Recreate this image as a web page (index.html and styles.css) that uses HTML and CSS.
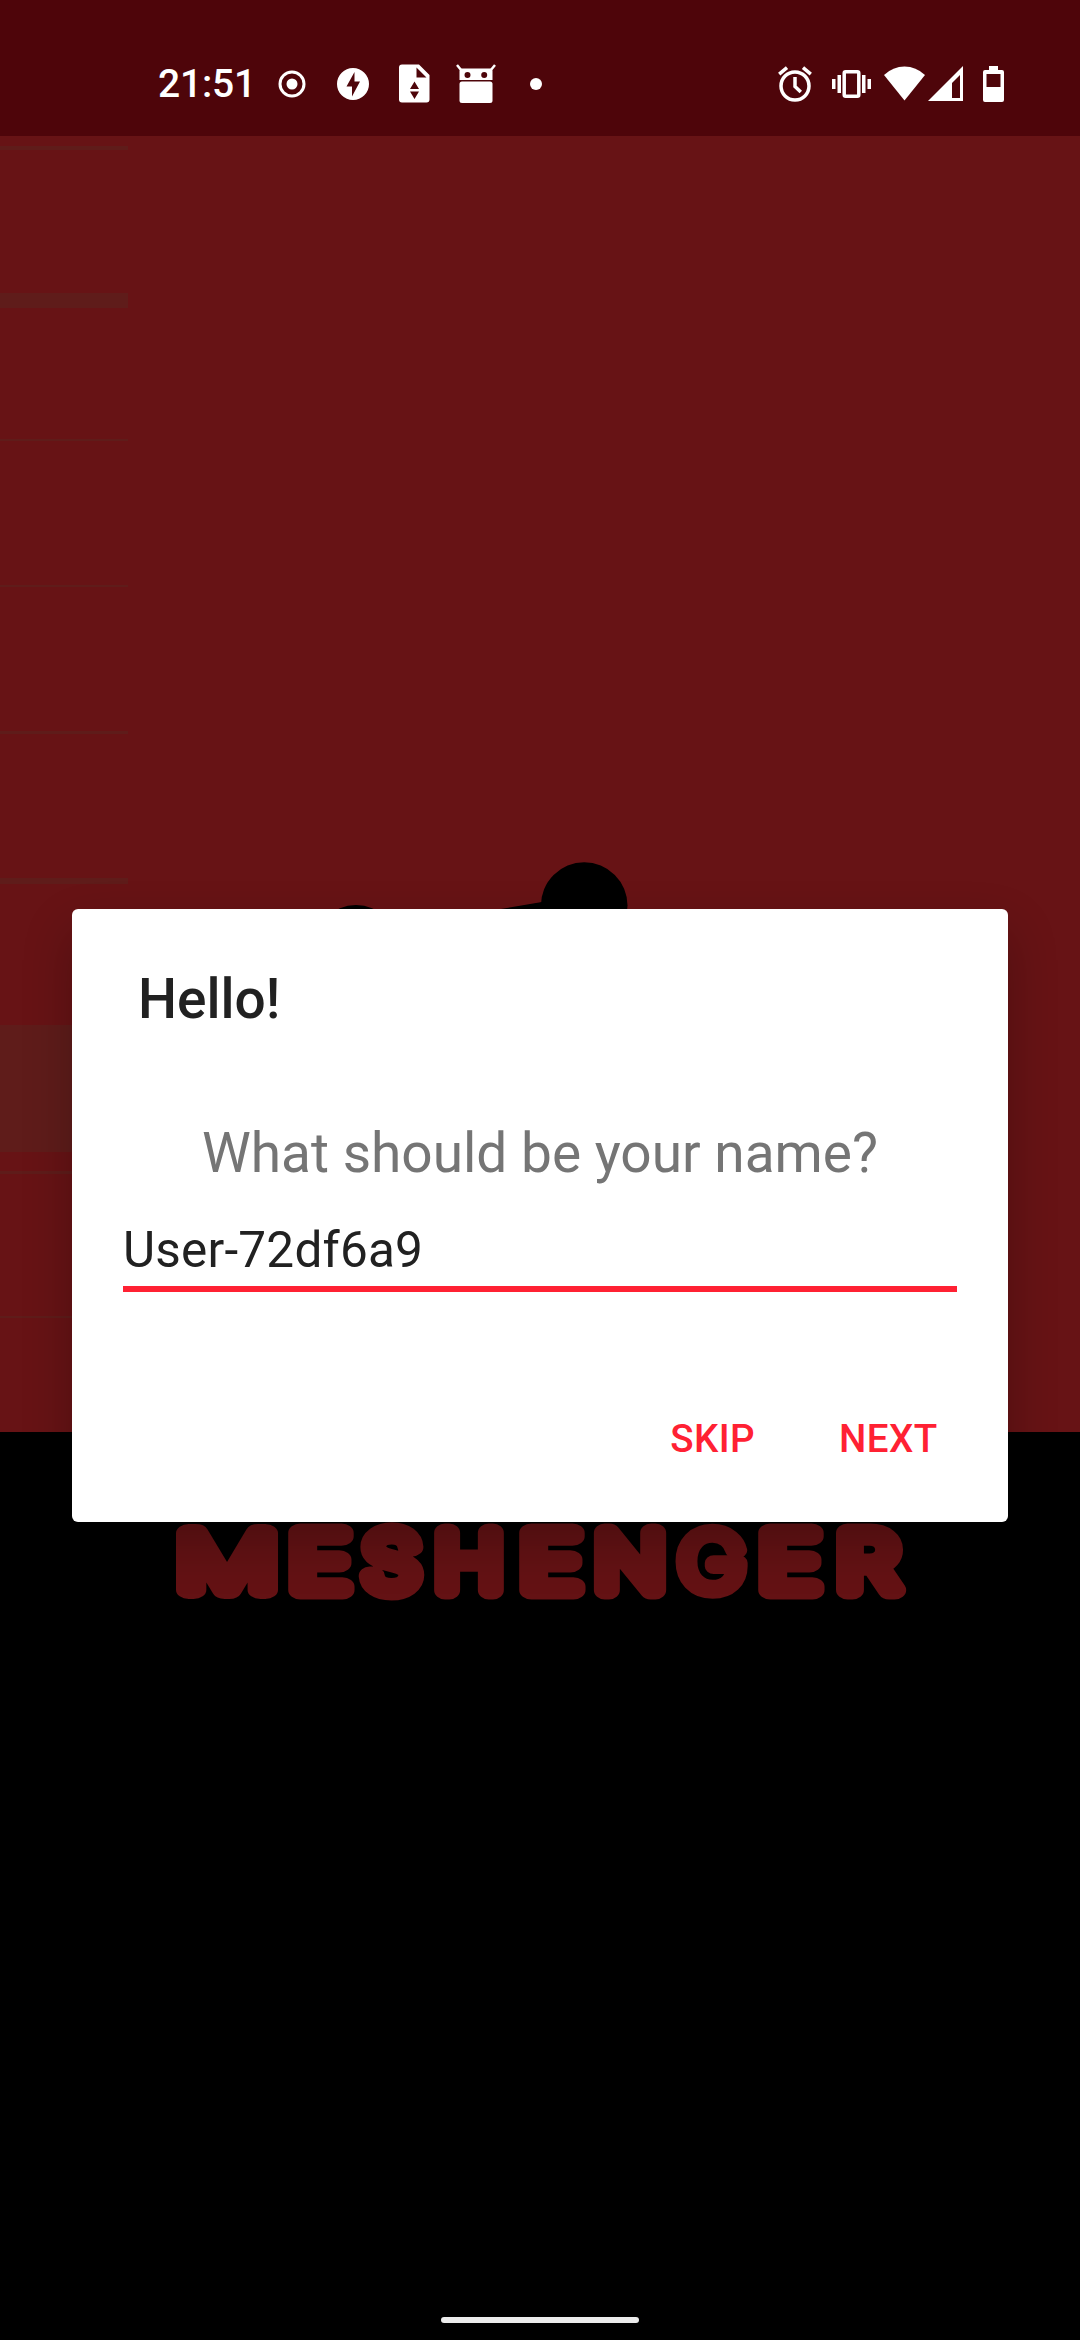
FILE: index.html
```html
<!DOCTYPE html>
<html lang="en">
<head>
<meta charset="utf-8">
<title>Meshenger</title>
<link rel="stylesheet" href="styles.css">
</head>
<body>
<div class="screen">
  <svg class="backdrop" viewBox="0 0 1080 2340" aria-hidden="true">
    <rect width="1080" height="2340" fill="#000"/>
    <rect y="136" width="1080" height="1296" fill="#671315"/>
    <g fill="#5f1c1a">
      <rect y="146" width="128" height="4"/>
      <rect y="293" width="128" height="15"/>
      <rect y="439" width="128" height="2"/>
      <rect y="585" width="128" height="2"/>
      <rect y="731" width="128" height="3"/>
      <rect y="878" width="128" height="6"/>
      <rect y="1025" width="128" height="127"/>
      <rect y="1171" width="128" height="3"/>
      <rect y="1316" width="128" height="2"/>
    </g>
    <path d="M356 947L584 905" stroke="#000" stroke-width="20"/>
    <path d="M495 910L545 901.500V920H495z"/>
    <circle cx="356" cy="947" r="42"/>
    <circle cx="584.200" cy="905.500" r="43.300"/>
    <text class="wordmark" transform="scale(1.15 1)" y="1590.500"><tspan class="wide" x="197.400" textLength="87" lengthAdjust="spacingAndGlyphs">M</tspan><tspan x="278" textLength="52" lengthAdjust="spacingAndGlyphs">E</tspan><tspan x="340.400 407.800">SH</tspan><tspan x="478.800" textLength="52" lengthAdjust="spacingAndGlyphs">E</tspan><tspan x="547.800">N</tspan><tspan class="open" x="619.100">G</tspan><tspan x="686.700" textLength="52" lengthAdjust="spacingAndGlyphs">E</tspan><tspan x="754.700" textLength="53" lengthAdjust="spacingAndGlyphs">R</tspan></text>
  </svg>

  <header class="status">
    <div class="group">
      <span class="time">21:51</span>
      <svg class="i-ring" width="28" height="28" viewBox="0 0 28 28"><circle cx="14" cy="14" r="12" fill="none" stroke="#fff" stroke-width="3"/><circle cx="14" cy="14" r="5.500"/></svg>
      <svg class="i-bolt" width="32" height="32" viewBox="0 0 32 32"><path fill-rule="evenodd" d="M16 0a16 16 0 1 0 0 32a16 16 0 1 0 0-32M17.500 4L9.500 18.500H15V28.500L23 13.500H17.500z"/></svg>
      <svg class="i-file" width="31" height="39" viewBox="0 0 31 39"><path fill-rule="evenodd" d="M3 .5H20L30.500 11V35.500a3 3 0 0 1-3 3H3a3 3 0 0 1-3-3V3.500a3 3 0 0 1 3-3M17.500 3.500V13.500H27.500zM15.500 17.500L11 25H20zM11 27.500L15.500 35L20 27.500z"/></svg>
      <svg class="i-robot" width="40" height="40" viewBox="0 0 40 40"><path d="M1 1L5.500 6.500M39 1L34.500 6.500" stroke="#fff" stroke-width="2.500"/><path fill-rule="evenodd" d="M5.500 4.500H34.500Q36.500 4.500 36.500 7V16H3.500V7Q3.500 4.500 5.500 4.500M11.500 8a3 3 0 1 0 0 6a3 3 0 1 0 0-6M28.200 8a3 3 0 1 0 0 6a3 3 0 1 0 0-6"/><rect x="3.500" y="17.500" width="33" height="21.500" rx="2.500"/></svg>
      <svg class="i-dot" width="12" height="12" viewBox="0 0 12 12"><circle cx="6" cy="6" r="6"/></svg>
    </div>
    <div class="group">
      <svg class="i-alarm" width="34" height="36" viewBox="0 0 34 36"><circle cx="17" cy="20" r="14" fill="none" stroke="#fff" stroke-width="3.500"/><path d="M17 11V20.500L22.800 26M9 1.700L1.200 8.200M25 1.700L32.800 8.200" fill="none" stroke="#fff" stroke-width="3.500"/></svg>
      <svg class="i-vibrate" width="39" height="28" viewBox="0 0 39 28"><rect x="12.200" y="1.800" width="14.600" height="24.400" rx="1.500" fill="none" stroke="#fff" stroke-width="3.500"/><path d="M0 9h3.500v10H0zM5.500 5H9v18H5.500zM30 5h3.500v18H30zM35.500 9H39v10h-3.500z"/></svg>
      <svg class="i-wifi" width="41" height="35" viewBox="0 0 41 35"><path d="M0 9Q9 .5 20.500 .5T41 9L20.500 34.500z"/></svg>
      <svg class="i-signal" width="35" height="35" viewBox="0 0 35 35"><path fill-rule="evenodd" d="M35 0V35H0zM32 9L24 17V32H32z"/></svg>
      <svg class="i-battery" width="21" height="36" viewBox="0 0 21 36"><path fill-rule="evenodd" d="M6 0H15V4H19Q21 4 21 6V34Q21 36 19 36H2Q0 36 0 34V6Q0 4 2 4H6zM3.500 8V21H17.500V8z"/></svg>
    </div>
  </header>

  <main class="stage">
    <section class="dialog">
      <h1 class="title">Hello!</h1>
      <p class="question">What should be your name?</p>
      <div class="field">User-72df6a9</div>
      <div class="actions">
        <span class="action">SKIP</span>
        <span class="action">NEXT</span>
      </div>
    </section>
  </main>

  <div class="nav"></div>
</div>
</body>
</html>
```

FILE: styles.css
```css
* { box-sizing: border-box; }

body {
  margin: 0;
  background: #000;
  font-family: Roboto, sans-serif;
}

.screen {
  position: relative;
  display: flex;
  flex-direction: column;
  width: 1080px;
  height: 2340px;
  overflow: hidden;
}

.backdrop {
  position: absolute;
  left: 0;
  top: 0;
  width: 1080px;
  height: 2340px;
}

.wordmark {
  font-family: Inter, sans-serif;
  font-size: 79px;
  font-weight: 200;
  text-anchor: middle;
  fill: #641214;
  stroke: #641214;
  stroke-width: 19px;
  stroke-linejoin: round;
}

.wordmark .wide { stroke-width: 18px; }
.wordmark .open { stroke-width: 15.5px; }

.status {
  z-index: 1;
  display: flex;
  justify-content: space-between;
  height: 136px;
  padding: 30px 76px 0 158px;
  background: #4e050a;
}

.group {
  display: flex;
  align-items: center;
  height: 107px;
}

.group svg {
  display: block;
  flex: none;
  fill: #fff;
}

.time {
  width: 120px;
  color: #fff;
  font-size: 39px;
  font-weight: 500;
  line-height: 48px;
  letter-spacing: -0.2px;
}

.i-bolt { margin-left: 31px; }
.i-file { margin-left: 30px; }
.i-robot { margin-left: 26px; }
.i-dot { margin-left: 34px; }
.i-vibrate { margin-left: 20px; }
.i-wifi { margin-left: 13px; }
.i-signal { margin-left: 3px; }
.i-battery { margin-left: 20px; }

.stage {
  z-index: 1;
  flex: 1;
  padding: 773px 72px 0;
}

.dialog {
  height: 613px;
  padding: 58px 51px 0;
  border-radius: 6px;
  background: #fff;
  box-shadow: 0 22px 50px rgba(0, 0, 0, 0.24);
}

.title {
  margin: 0 0 90px 15px;
  color: #212121;
  font-size: 55px;
  font-weight: 500;
  line-height: 64px;
}

.question {
  margin: 0 0 36px;
  color: #757575;
  font-size: 55px;
  line-height: 64px;
  text-align: center;
}

.field {
  padding-bottom: 7px;
  border-bottom: 6px solid #ff2133;
  color: #212121;
  font-size: 49.5px;
  line-height: 58px;
  letter-spacing: 0.2px;
}

.actions {
  display: flex;
  justify-content: flex-end;
  gap: 84px;
  margin-top: 124px;
  padding-right: 19.5px;
}

.action {
  color: #ff2133;
  font-size: 38.5px;
  font-weight: 500;
  line-height: 46px;
  letter-spacing: 0.4px;
}

.nav {
  z-index: 1;
  width: 198px;
  height: 6px;
  margin: 0 auto 17px;
  border-radius: 3px;
  background: #ebebeb;
}
```
